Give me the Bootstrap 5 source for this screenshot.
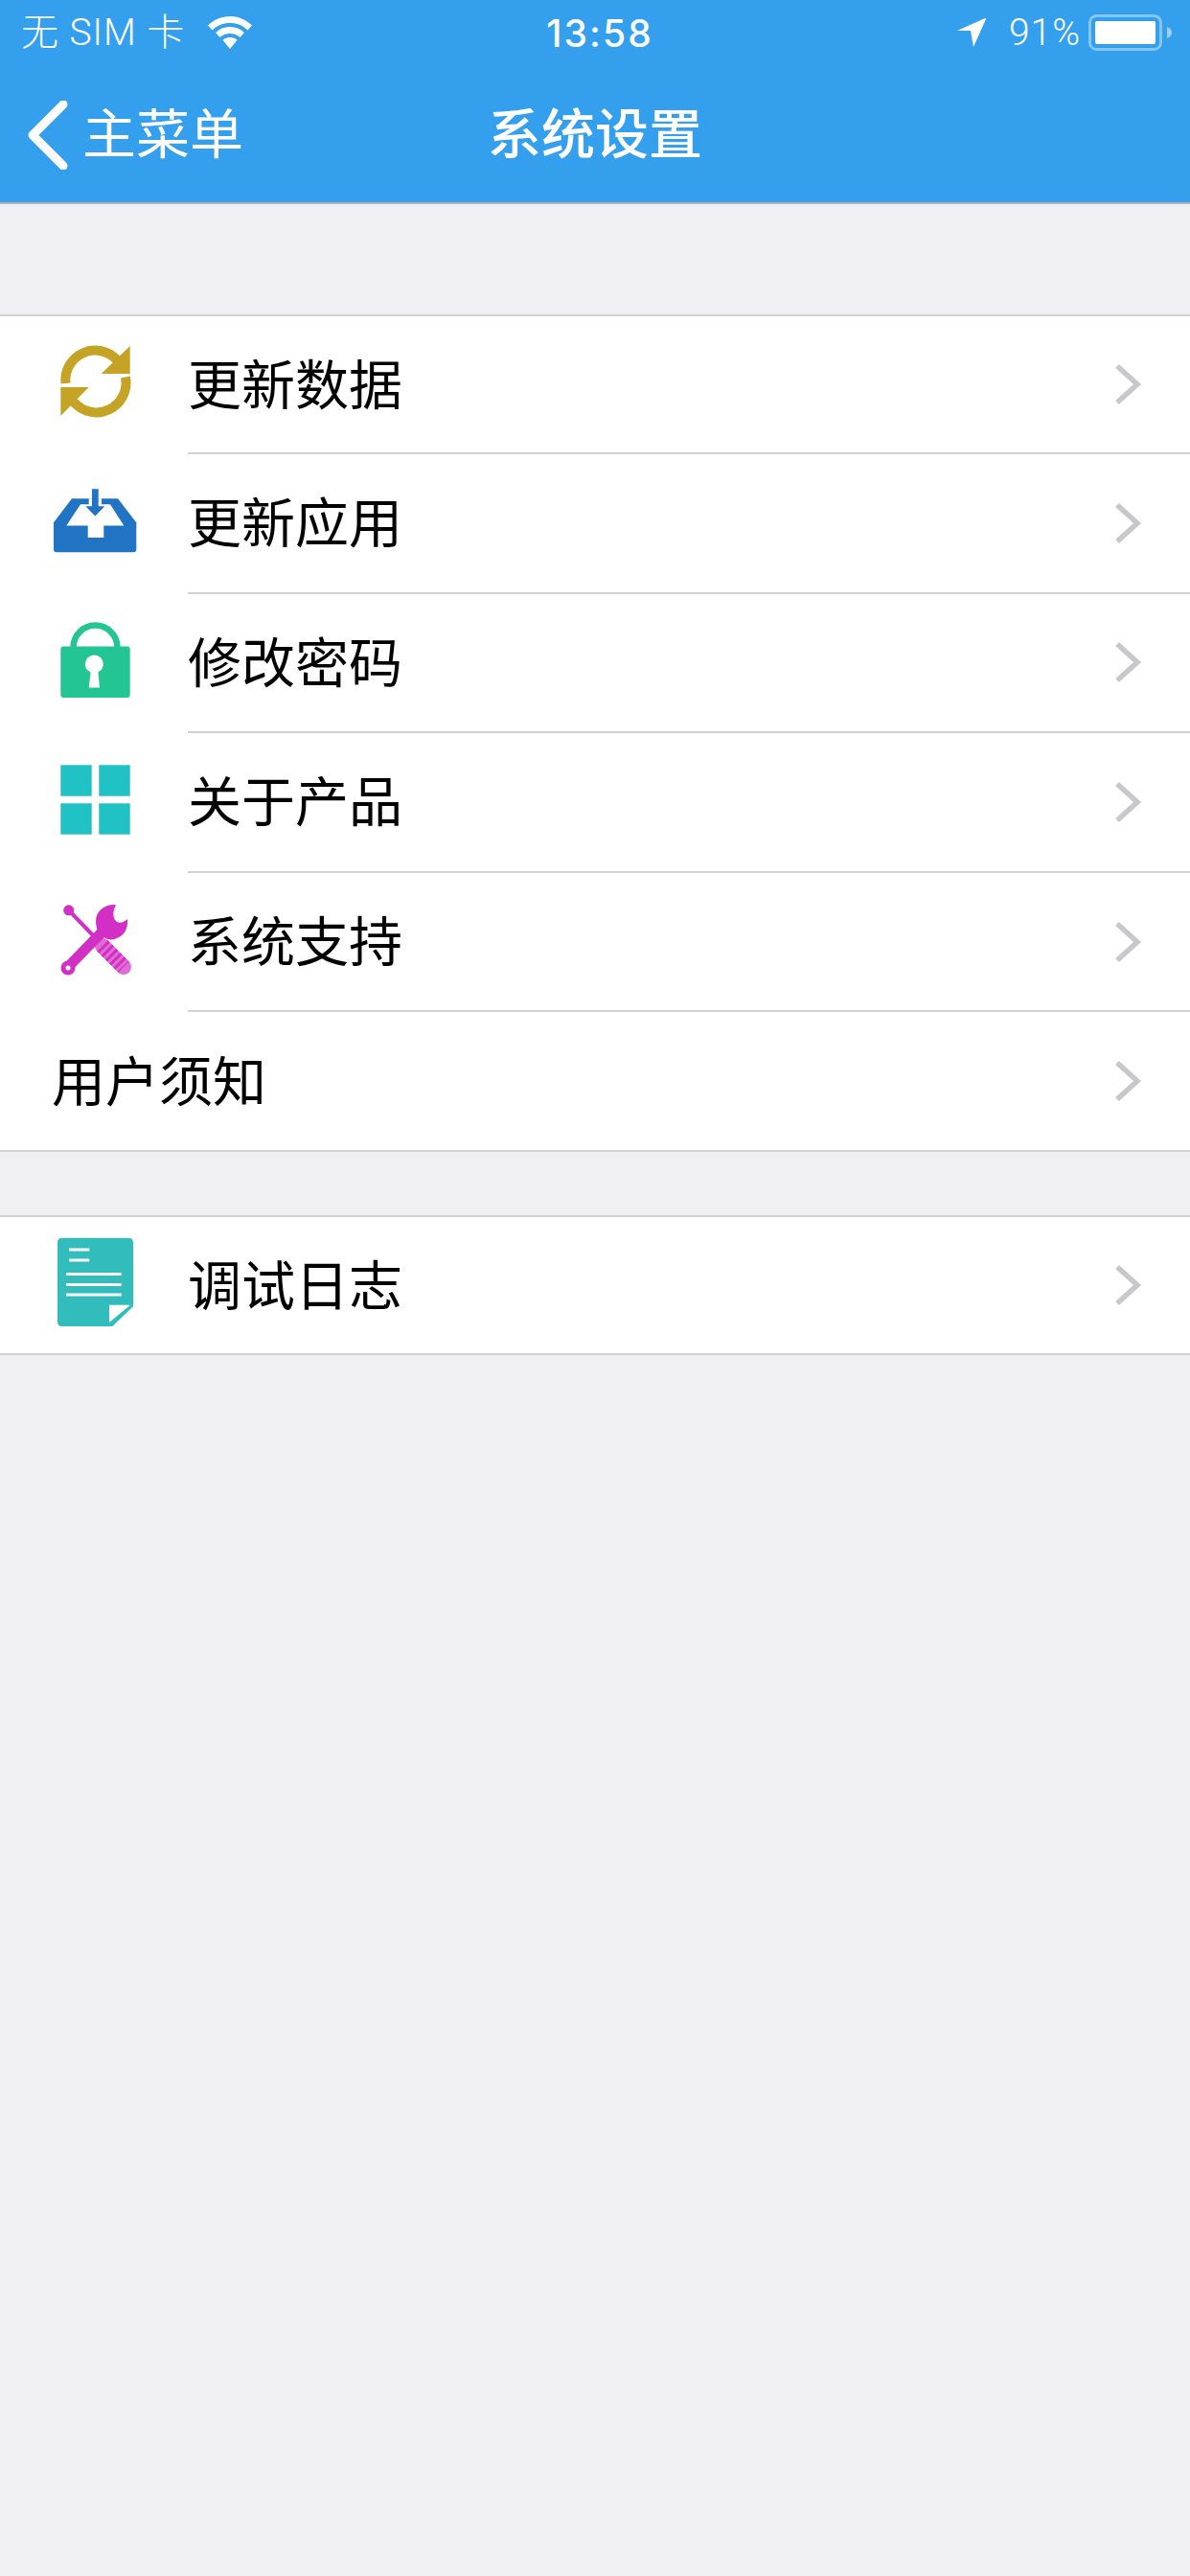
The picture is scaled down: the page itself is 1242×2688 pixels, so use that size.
<!DOCTYPE html>
<html lang="zh-CN">
<head>
<meta charset="utf-8">
<title>系统设置</title>
<link href="https://cdn.jsdelivr.net/npm/bootstrap@5.3.0/dist/css/bootstrap.min.css" rel="stylesheet">
<style>
html,body{width:1242px;height:2688px;margin:0;background:#efeff4;overflow:hidden}
body{font-family:"Liberation Sans","Noto Sans CJK SC",sans-serif;color:#000}
.topbar{background:#349fec;color:#fff;height:213px;border-bottom:2px solid #b3b3b6}
.statusline{height:60px;padding:8px 18px 0 22px;font-family:Roboto,"Noto Sans CJK SC",sans-serif;font-size:39px;font-weight:300;line-height:1;letter-spacing:1px}
.sideblock{flex:1 1 0}
.clock{font-family:Inter,"Liberation Sans",sans-serif;font-weight:500;font-size:39px;letter-spacing:2.100px;margin-left:6px}
.simtext{white-space:pre}
.navline{height:151px}
.backlink{padding-top:10px;font-size:56px;line-height:1}
.backinner{gap:12px;padding-left:29px}
.navtitle{font-size:56px;font-weight:500;line-height:1;padding-top:10px}
.settings-group{background:#fff;border-top:2px solid #d2d2d6;border-bottom:2px solid #d2d2d6}
.first-group{margin-top:115px}
.second-group{margin-top:66px}
.setting-row{height:145.6px;font-size:56px;line-height:1}
.setting-row.short-row{height:144px}
.second-group .setting-row{height:142px}
.icon-slot{width:196px;flex:none;padding-left:50px}
.icon-slot svg{display:block}
.row-body{border-bottom:2px solid #d2d2d6;padding-right:50px}
.no-line{border-bottom:0;padding-left:54px}
.row-label{flex:1 1 auto;padding-top:3px}
</style>
</head>
<body>
<header class="topbar">
  <div class="statusline d-flex align-items-center">
    <div class="sideblock d-flex align-items-center">
      <span class="simtext">无 SIM 卡</span>
      <svg class="ms-4" width="46" height="34" viewBox="0 0 46 34"><path d="M23 0C14 0 6.500 3.500 0 9.500l4.500 5C9.500 9.500 16 7 23 7s13.500 2.500 18.500 7.500l4.500-5C39.500 3.500 32 0 23 0z" fill="#fff"/><path d="M23 11c-6 0-11 2.300-15 6l4.500 5c3-2.600 6.600-4 10.500-4s7.500 1.400 10.500 4l4.500-5c-4-3.700-9-6-15-6z" fill="#fff"/><path d="M23 22c-3 0-5.500 1-7.500 2.800L23 34l7.500-9.200C28.500 23 26 22 23 22z" fill="#fff"/></svg>
    </div>
    <span class="clock">13:58</span>
    <div class="sideblock d-flex align-items-center justify-content-end">
      <svg width="30" height="30" viewBox="0 0 30 30"><path d="M0 13 29 0a1 1 0 0 1 1 1L17 30l-3-17z" fill="#fff"/></svg>
      <span class="ms-4">91%</span>
      <svg class="ms-2" width="88" height="38" viewBox="0 0 88 38"><rect x="1.500" y="1.500" width="74" height="35" rx="7" fill="none" stroke="#fff" stroke-opacity=".4" stroke-width="3"/><rect x="7" y="7" width="63" height="24" rx="2" fill="#fff"/><path d="M82 13c3 1 5 3 5 6s-2 5-5 6z" fill="#fff" fill-opacity=".5"/></svg>
    </div>
  </div>
  <nav class="navline d-flex align-items-center">
    <div class="sideblock backlink">
      <div class="backinner d-flex align-items-center">
        <svg width="45" height="72" viewBox="0 0 45 72"><path d="M37 4 5 36l32 32" fill="none" stroke="#fff" stroke-width="9" stroke-linecap="round" stroke-linejoin="round"/></svg>
        <span>主菜单</span>
      </div>
    </div>
    <div class="navtitle">系统设置</div>
    <div class="sideblock"></div>
  </nav>
</header>

<main>
  <section class="settings-group first-group">
    <div class="setting-row short-row d-flex">
      <div class="icon-slot d-flex align-items-center">
        <svg width="100" height="100" viewBox="0 1.500 100 100"><g fill="none" stroke="#c5a324" stroke-width="10"><path d="M18.500 49.500A31 31 0 0 1 72 25"/><path d="M81 43A31 31 0 0 1 27 69"/></g><g fill="#c5a324"><path d="M85.700 10.500V39.500H55.700z"/><path d="M13.300 53.500H42.700L13.300 83.500z"/></g></svg>
      </div>
      <div class="row-body d-flex flex-fill align-items-center"><span class="row-label">更新数据</span><svg width="32" height="48" viewBox="0 0 32 48"><path d="M6 5l21 19L6 43" fill="none" stroke="#c7c7cc" stroke-width="5.500"/></svg></div>
    </div>
    <div class="setting-row d-flex">
      <div class="icon-slot d-flex align-items-center">
        <svg width="100" height="100" viewBox="0 1.800 100 100"><path d="M6 50 25 25H73L92.300 50V78Q92.300 81 89 81H9Q6 81 6 78z" fill="#2173c4"/><path d="M19.300 53.300 34 31H42.700V25H56V31H65L79.300 53.300H58.300V65.700H41.700V53.300z" fill="#fff"/><path d="M46 15H52.700V33H59.300L49.300 43.300 39.300 33H46z" fill="#2173c4"/></svg>
      </div>
      <div class="row-body d-flex flex-fill align-items-center"><span class="row-label">更新应用</span><svg width="32" height="48" viewBox="0 0 32 48"><path d="M6 5l21 19L6 43" fill="none" stroke="#c7c7cc" stroke-width="5.500"/></svg></div>
    </div>
    <div class="setting-row d-flex">
      <div class="icon-slot d-flex align-items-center">
        <svg width="100" height="100" viewBox="0 2.400 100 100"><path d="M26.500 36A23 23 0 0 1 72.500 36" fill="none" stroke="#24c595" stroke-width="6.500"/><rect x="13.300" y="35" width="72.400" height="53.300" rx="3" fill="#24c595"/><circle cx="48.300" cy="53.300" r="9.500" fill="#fff"/><path d="M45 58H52L54 78H42.700z" fill="#fff"/></svg>
      </div>
      <div class="row-body d-flex flex-fill align-items-center"><span class="row-label">修改密码</span><svg width="32" height="48" viewBox="0 0 32 48"><path d="M6 5l21 19L6 43" fill="none" stroke="#c7c7cc" stroke-width="5.500"/></svg></div>
    </div>
    <div class="setting-row d-flex">
      <div class="icon-slot d-flex align-items-center">
        <svg width="100" height="100" viewBox="0 2 100 100"><g fill="#20c2c5"><rect x="13.300" y="12.300" width="32.400" height="32.400"/><rect x="53.300" y="12.300" width="32.400" height="32.400"/><rect x="13.300" y="52.300" width="32.400" height="32.400"/><rect x="53.300" y="52.300" width="32.400" height="32.400"/></g></svg>
      </div>
      <div class="row-body d-flex flex-fill align-items-center"><span class="row-label">关于产品</span><svg width="32" height="48" viewBox="0 0 32 48"><path d="M6 5l21 19L6 43" fill="none" stroke="#c7c7cc" stroke-width="5.500"/></svg></div>
    </div>
    <div class="setting-row d-flex">
      <div class="icon-slot d-flex align-items-center">
        <svg width="100" height="100" viewBox="0 2 100 100"><path d="M21.700 17.800 48 45" stroke="#d22fc4" stroke-width="4" fill="none"/><circle cx="21.700" cy="17.800" r="5.500" fill="#d22fc4"/><path d="M57 55 79 77" stroke="#df6cd5" stroke-width="16" stroke-linecap="round" fill="none"/><path d="M57 55 79 77" stroke="#d22fc4" stroke-width="16" stroke-dasharray="3 3" fill="none"/><path d="M21 77 58 39" stroke="#d22fc4" stroke-width="11" stroke-linecap="round" fill="none"/><circle cx="21" cy="78" r="7.500" fill="#d22fc4"/><path d="M71 12C60 11 50 18 50 29C50 33 51 38 53 41L60 47C64 49 68 49 72 47C79 44 84 38 83 27C79 31 74 32 71 29C68 26 67 20 71 12z" fill="#d22fc4"/><circle cx="21" cy="78" r="2.500" fill="#fff"/></svg>
      </div>
      <div class="row-body d-flex flex-fill align-items-center"><span class="row-label">系统支持</span><svg width="32" height="48" viewBox="0 0 32 48"><path d="M6 5l21 19L6 43" fill="none" stroke="#c7c7cc" stroke-width="5.500"/></svg></div>
    </div>
    <div class="setting-row short-row d-flex">
      <div class="row-body no-line d-flex flex-fill align-items-center"><span class="row-label">用户须知</span><svg width="32" height="48" viewBox="0 0 32 48"><path d="M6 5l21 19L6 43" fill="none" stroke="#c7c7cc" stroke-width="5.500"/></svg></div>
    </div>
  </section>

  <section class="settings-group second-group">
    <div class="setting-row d-flex">
      <div class="icon-slot d-flex align-items-center">
        <svg width="100" height="100" viewBox="0 0 100 100"><path d="M15 .7H84Q89 .7 89 5.700V72.300L67.300 93H15Q10 93 10 88V5.700Q10 .7 15 .7z" fill="#32bdbc"/><path d="M64 70.700H86L64 89z" fill="#fff"/><g fill="#fff"><rect x="22.300" y="11.500" width="21" height="3"/><rect x="22.300" y="22.500" width="21" height="3"/><rect x="19" y="37" width="57.700" height="3"/><rect x="19" y="48" width="57.700" height="3"/><rect x="19" y="58.500" width="57.700" height="3"/></g></svg>
      </div>
      <div class="row-body d-flex flex-fill align-items-center border-0"><span class="row-label">调试日志</span><svg width="32" height="48" viewBox="0 0 32 48"><path d="M6 5l21 19L6 43" fill="none" stroke="#c7c7cc" stroke-width="5.500"/></svg></div>
    </div>
  </section>
</main>
<script src="https://cdn.jsdelivr.net/npm/bootstrap@5.3.0/dist/js/bootstrap.bundle.min.js"></script>
</body>
</html>
